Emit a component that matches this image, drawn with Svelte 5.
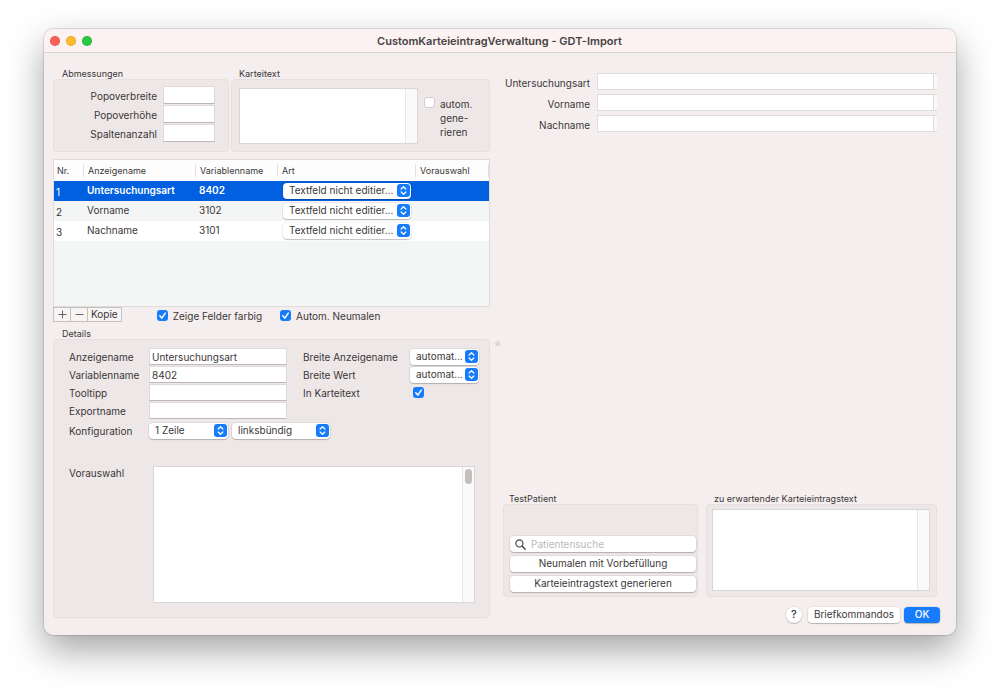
<script>
  const dims = [
    { id: 'popover-breite', label: 'Popoverbreite' },
    { id: 'popover-hoehe', label: 'Popoverhöhe' },
    { id: 'spaltenanzahl', label: 'Spaltenanzahl' },
  ];
  const rows = [
    { nr: 1, name: 'Untersuchungsart', variable: '8402' },
    { nr: 2, name: 'Vorname', variable: '3102' },
    { nr: 3, name: 'Nachname', variable: '3101' },
  ];
  let selected = $state(1);
  let colored = $state(true);
  let redraw = $state(true);
  let inText = $state(true);
  let auto = $state(false);
</script>

{#snippet popup(id, label, text)}
  <span class="popup">
    <select {id} aria-label={label}><option>{text}</option></select>
    <svg viewBox="0 0 13 13" aria-hidden="true">
      <rect width="13" height="13" rx="3" fill="#167cfb" />
      <path d="M4.1 5 6.5 2.7 8.9 5M4.1 8l2.4 2.3L8.9 8" fill="none" stroke="#fff" stroke-width="1.2" stroke-linecap="round" stroke-linejoin="round" />
    </svg>
  </span>
{/snippet}

<div class="desktop">
  <main class="window">
    <header>
      <div class="lights">
        <button class="red" aria-label="Schließen"></button>
        <button class="yellow" aria-label="Minimieren"></button>
        <button class="green" aria-label="Vergrößern"></button>
      </div>
      <h1>CustomKarteieintragVerwaltung - GDT-Import</h1>
    </header>

    <div class="body">
      <div class="left">
        <div class="top">
          <section class="group dims">
            <h2>Abmessungen</h2>
            <div class="box">
              {#each dims as d}
                <label for={d.id}>{d.label}</label>
                <input class="field" id={d.id} type="text" />
              {/each}
            </div>
          </section>
          <section class="group karteitext">
            <h2>Karteitext</h2>
            <div class="box">
              <div class="area"><textarea aria-label="Karteitext"></textarea><i class="lane"></i></div>
              <label class="check"><input type="checkbox" bind:checked={auto} /><span>autom.<br />gene-<br />rieren</span></label>
            </div>
          </section>
        </div>

        <div class="tablebox">
          <table>
            <colgroup><col class="c1" /><col class="c2" /><col class="c3" /><col class="c4" /><col /></colgroup>
            <thead>
              <tr><th>Nr.</th><th>Anzeigename</th><th>Variablenname</th><th>Art</th><th>Vorauswahl</th></tr>
            </thead>
            <tbody>
              {#each rows as r}
                <tr class:selected={selected === r.nr} onclick={() => (selected = r.nr)}>
                  <td class="nr">{r.nr}</td>
                  <td>{r.name}</td>
                  <td>{r.variable}</td>
                  <td class="art">{@render popup(`art-${r.nr}`, 'Art', 'Textfeld nicht editier...')}</td>
                  <td></td>
                </tr>
              {/each}
            </tbody>
          </table>
        </div>

        <div class="tools">
          <div class="segments">
            <button class="sym" aria-label="Hinzufügen"><svg viewBox="0 0 9 9"><path d="M0.5 4.5h8M4.5 0.5v8" stroke="#666" /></svg></button>
            <button class="sym" aria-label="Entfernen"><svg viewBox="0 0 9 9"><path d="M0.5 4.5h8" stroke="#666" /></svg></button>
            <button>Kopie</button>
          </div>
          <label class="check first"><input type="checkbox" bind:checked={colored} />Zeige Felder farbig</label>
          <label class="check"><input type="checkbox" bind:checked={redraw} />Autom. Neumalen</label>
        </div>

        <section class="group details">
          <h2>Details</h2>
          <div class="box">
            <div class="form">
              <label for="d-name">Anzeigename</label>
              <input class="field" id="d-name" type="text" value="Untersuchungsart" />
              <label class="second" for="d-bname">Breite Anzeigename</label>
              {@render popup('d-bname', 'Breite Anzeigename', 'automat...')}

              <label for="d-var">Variablenname</label>
              <input class="field" id="d-var" type="text" value="8402" />
              <label class="second" for="d-bwert">Breite Wert</label>
              {@render popup('d-bwert', 'Breite Wert', 'automat...')}

              <label for="d-tip">Tooltipp</label>
              <input class="field" id="d-tip" type="text" />
              <label class="second" for="d-intext">In Karteitext</label>
              <input class="lone" id="d-intext" type="checkbox" bind:checked={inText} />

              <label for="d-export">Exportname</label>
              <input class="field" id="d-export" type="text" />
            </div>
            <div class="config">
              <label for="d-conf">Konfiguration</label>
              <div class="lines">{@render popup('d-conf', 'Zeilen', '1 Zeile')}</div>
              <div class="align">{@render popup('d-align', 'Ausrichtung', 'linksbündig')}</div>
            </div>
            <div class="preset">
              <label for="d-preset">Vorauswahl</label>
              <div class="area"><textarea id="d-preset"></textarea><i class="lane"><b></b></i></div>
            </div>
          </div>
        </section>
      </div>

      <div class="splitter"><i></i></div>

      <div class="right">
        <div class="preview">
          {#each rows as r}
            <label for="p-{r.nr}">{r.name}</label>
            <div class="line"><input id="p-{r.nr}" type="text" /><i></i></div>
          {/each}
        </div>

        <div class="bottom">
          <section class="group patient">
            <h2>TestPatient</h2>
            <div class="box">
              <div class="search">
                <svg viewBox="0 0 12 12" aria-hidden="true"><circle cx="4.8" cy="4.8" r="3.9" fill="none" stroke="#444" stroke-width="1.2" /><path d="M7.7 7.7l3.4 3.4" stroke="#444" stroke-width="1.5" stroke-linecap="round" /></svg>
                <input type="text" aria-label="Patientensuche" placeholder="Patientensuche" />
              </div>
              <button class="push">Neumalen mit Vorbefüllung</button>
              <button class="push">Karteieintragstext generieren</button>
            </div>
          </section>
          <section class="group expected">
            <h2>zu erwartender Karteieintragstext</h2>
            <div class="box">
              <div class="area"><textarea aria-label="zu erwartender Karteieintragstext"></textarea><i class="lane"></i></div>
            </div>
          </section>
        </div>

        <footer>
          <button class="push help" aria-label="Hilfe">?</button>
          <button class="push cmd">Briefkommandos</button>
          <button class="push ok">OK</button>
        </footer>
      </div>
    </div>
  </main>
</div>

<style>
  :global(body) {
    background: #fff;
    font: 10px/14px Inter, 'Liberation Sans', sans-serif;
    color: #3a3738;
  }
  * { box-sizing: border-box; }
  h1, h2 { margin: 0; }
  button, input, select, textarea { font: inherit; color: inherit; margin: 0; padding: 0; outline: none; border-radius: 0; }

  .desktop { min-height: 100vh; padding: 29px 44px 59px; display: flex; }
  .window {
    flex: 1; min-width: 0; display: flex; flex-direction: column;
    background: #f4eeee; border-radius: 9px;
    box-shadow: 0 0 0 1px rgba(0, 0, 0, .12), 0 15px 36px rgba(0, 0, 0, .36);
  }
  header {
    display: grid; grid-template-columns: 1fr auto 1fr; align-items: center;
    height: 24px; padding: 0 7px 0 6px; background: #fbf2f1;
    border-bottom: 1px solid #d9d4d4; border-radius: 9px 9px 0 0;
  }
  h1 { font-size: 11px; font-weight: 600; line-height: 14px; color: #474344; }
  .lights { display: flex; gap: 6px; }
  .lights button { width: 10px; height: 10px; border-radius: 50%; border: 1px solid rgba(0, 0, 0, .1); }
  .red { background: #fe5f57; }
  .yellow { background: #febb2e; }
  .green { background: #28c840; }

  .body {
    flex: 1; display: grid; grid-template-columns: minmax(0, 1fr) 13px minmax(0, 1fr);
    padding: 15px 16px 12px 9px;
  }
  .left { display: flex; flex-direction: column; padding-bottom: 5px; }
  .splitter { display: flex; align-items: center; justify-content: flex-end; padding: 0 3px 4px 0; }
  .splitter i { width: 5px; height: 5px; border-radius: 50%; background: #dcd6d6; }
  .right { display: flex; flex-direction: column; }

  .group { display: flex; flex-direction: column; }
  .group h2 { font-size: 9px; font-weight: 400; line-height: 11px; padding-left: 9px; }
  .box { flex: 1; background: #ede7e7; border: 1px solid #e6dfdf; border-radius: 4px; }

  .field {
    width: 100%; height: 17px; padding: 0 2px; background: #fff;
    border: 1px solid #dfd9d9; border-bottom-color: #bdb8b8;
  }
  .area { display: flex; background: #fff; border: 1px solid #dcd7d7; }
  textarea { flex: 1; min-width: 0; border: 0; background: none; resize: none; display: block; }
  .lane { width: 12px; background: #fafafa; border-left: 1px solid #e8e6e6; display: flex; justify-content: center; padding-top: 2px; }
  .lane b { width: 7px; height: 15px; border-radius: 4px; background: #c4c0c0; }

  .top { display: grid; grid-template-columns: 176px 1fr; gap: 2px; }
  .dims .box { display: grid; grid-template-columns: 1fr 52px; gap: 1px 6px; align-items: center; text-align: right; padding: 6px 13px 9px; }
  .dims .field { height: 18px; }
  .dims label { padding-top: 2px; }
  .karteitext h2 { padding-left: 8px; }
  .karteitext .box { display: flex; padding: 8px 7px 7px; gap: 6px; }
  .karteitext .area { flex: 1; }
  .karteitext .check { align-items: flex-start; gap: 5px; width: 58px; padding-top: 9px; }

  input[type='checkbox'] {
    appearance: none; flex: none; width: 11px; height: 11px; border-radius: 3px;
    background: #fff; border: 1px solid #d2cdcd;
  }
  input[type='checkbox']:checked {
    border: 0;
    background: #167cfb url("data:image/svg+xml,%3Csvg xmlns='http://www.w3.org/2000/svg' viewBox='0 0 11 11'%3E%3Cpath d='M2.8 5.8l2 2.3 3.5-5' fill='none' stroke='white' stroke-width='1.5' stroke-linecap='round' stroke-linejoin='round'/%3E%3C/svg%3E");
  }
  .check { display: flex; align-items: center; gap: 5px; }

  .tablebox { margin-top: 7px; height: 148px; background: #f4f5f5; border: 1px solid #e0dcdc; }
  table { width: 100%; border-collapse: collapse; table-layout: fixed; }
  .c1 { width: 30px; }
  .c2 { width: 112px; }
  .c3 { width: 82px; }
  .c4 { width: 138px; }
  th {
    height: 21px; padding: 0 0 0 4px; text-align: left; font-size: 9px; font-weight: 400; line-height: 11px;
    background: #fefdfd linear-gradient(#e4dfdf, #e4dfdf) right center / 1px 13px no-repeat;
  }
  th:first-child { padding-left: 3px; }
  td { height: 20px; padding: 0 0 2px 3px; line-height: 14px; }
  tbody tr { background: #fff; }
  tbody tr:nth-child(even) { background: #f4f5f5; }
  tbody tr.selected { background: #0160df; color: #fff; font-weight: 600; }
  td.nr { padding: 2px 0 0 2px; font-weight: 400; }
  td.art { padding: 0 5px 1px; }

  .popup { position: relative; display: block; width: 100%; height: 16px; color: #3a3738; font-weight: 400; }
  .popup select {
    appearance: none; display: block; width: 100%; height: 16px; padding: 0 16px 2px 6px;
    line-height: 14px; background: #fff; border: 0; border-radius: 4px;
    box-shadow: 0 0 0 1px rgba(0, 0, 0, .05), 0 1px 1px rgba(0, 0, 0, .2);
  }
  .popup svg { position: absolute; right: 1px; top: 1px; width: 13px; height: 13px; pointer-events: none; }

  .tools { display: flex; align-items: center; height: 15px; }
  .segments { display: flex; }
  .segments button { height: 15px; padding: 0 3px; line-height: 13px; background: #f7f4f4; border: 1px solid #c6c1c1; margin-right: -1px; }
  .segments .sym { width: 18px; display: flex; align-items: center; justify-content: center; }
  .segments svg { width: 9px; height: 9px; flex: none; }
  .tools .check { padding-top: 2px; margin-left: 18px; }
  .tools .first { margin-left: 36px; }

  .details { flex: 1; margin-top: 6px; }
  .details .box { display: flex; flex-direction: column; padding: 8px 10px 14px 15px; }
  .form { display: grid; grid-template-columns: 80px minmax(0, 1fr) 107px 69px; row-gap: 1px; align-items: center; }
  .form .second { grid-column: 3; }
  .form > .field { width: auto; margin-right: 16px; }
  .form label, .config label { line-height: 15px; padding-top: 2px; }
  .lone { margin-left: 3px; }
  .config { display: grid; grid-template-columns: 80px 79px 98px; align-items: center; margin-top: 3px; }
  .config .align { margin-left: 4px; margin-right: -4px; }
  .preset { flex: 1; display: grid; grid-template-columns: 84px minmax(0, 1fr); margin-top: 27px; padding-right: 4px; }

  .preview { display: grid; grid-template-columns: 87px minmax(0, 1fr); gap: 4px 7px; align-items: center; text-align: right; padding-top: 5px; margin-right: 3px; }
  .preview label { padding-top: 2px; }
  .line { display: flex; height: 17px; background: #fff; border: 1px solid #e0dbdb; border-right: 0; }
  .line input { flex: 1; min-width: 0; border: 0; background: none; }
  .line i { width: 4px; border-left: 1px solid #e0dbdb; background: #faf8f8; }

  .bottom { margin-top: auto; display: grid; grid-template-columns: 195px minmax(0, 1fr); gap: 8px; height: 104px; margin-right: 3px; }
  .bottom h2 { padding-left: 6px; }
  .patient .box { display: flex; flex-direction: column; justify-content: flex-end; gap: 4px; padding: 0 1px 4px 6px; }
  .bottom .expected h2 { padding-left: 8px; }
  .expected .box { display: flex; padding: 4px 6px 5px 5px; }
  .expected .area { flex: 1; }

  .push, .search {
    height: 16px; border: 0; border-radius: 4px; background: #fff; line-height: 14px;
    box-shadow: 0 0 0 1px rgba(0, 0, 0, .05), 0 1px 1px rgba(0, 0, 0, .2);
  }
  .push { padding: 0 0 2px; }
  .search { display: flex; align-items: center; gap: 5px; padding: 0 5px; }
  .search svg { width: 11px; height: 11px; flex: none; }
  .search input { flex: 1; min-width: 0; border: 0; background: none; height: 16px; }
  .search input::placeholder { color: #bdb9b9; opacity: 1; }
  footer { display: flex; justify-content: flex-end; gap: 4px; margin-top: 10px; }
  .push.help { width: 16px; border-radius: 50%; margin-right: 2px; font-size: 11px; font-weight: 500; }
  .push.cmd { padding: 0 6px 2px; }
  .push.ok { width: 36px; background: #167cfb; color: #fff; font-weight: 500; }
</style>
